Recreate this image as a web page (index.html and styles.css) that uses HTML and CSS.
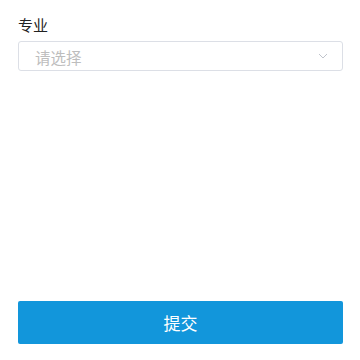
FILE: index.html
```html
<!DOCTYPE html>
<html lang="zh">
<head>
<meta charset="utf-8">
<link rel="stylesheet" href="styles.css">
</head>
<body>
<div class="page">
  <form class="form">
    <div class="field">
      <div class="label">专业</div>
      <div class="select">
        <span class="placeholder">请选择</span>
        <svg class="chevron" width="10" height="6" viewBox="0 0 10 6"><path d="M1 1 L5 5 L9 1" fill="none" stroke="#c0c4cc" stroke-width="1"/></svg>
      </div>
    </div>
    <button type="button" class="submit">提交</button>
  </form>
</div>
</body>
</html>
```
FILE: styles.css
```css
html, body {
  margin: 0;
  padding: 0;
  background: #fff;
}
body {
  font-family: "Noto Sans CJK SC", "Noto Sans", sans-serif;
  width: 360px;
  height: 360px;
}
.page {
  padding: 14px 17px 0 18px;
}
.form {
  display: flex;
  flex-direction: column;
  height: 330px;
}
.label {
  font-size: 15px;
  line-height: 22px;
  color: #222;
  margin-bottom: 5px;
}
.select {
  box-sizing: border-box;
  height: 30px;
  border: 1px solid #dcdfe6;
  border-radius: 3px;
  display: flex;
  align-items: center;
  justify-content: space-between;
  padding: 0 14px 0 16px;
}
.placeholder {
  font-size: 15.5px;
  color: #bdbdbd;
  padding-top: 1px;
}
.chevron {
  display: block;
}
.submit {
  margin-top: auto;
  height: 43px;
  border: none;
  border-radius: 2px;
  background: #1296db;
  color: #fff;
  font-family: "Noto Sans CJK SC", sans-serif;
  font-size: 17px;
  cursor: pointer;
}
```
